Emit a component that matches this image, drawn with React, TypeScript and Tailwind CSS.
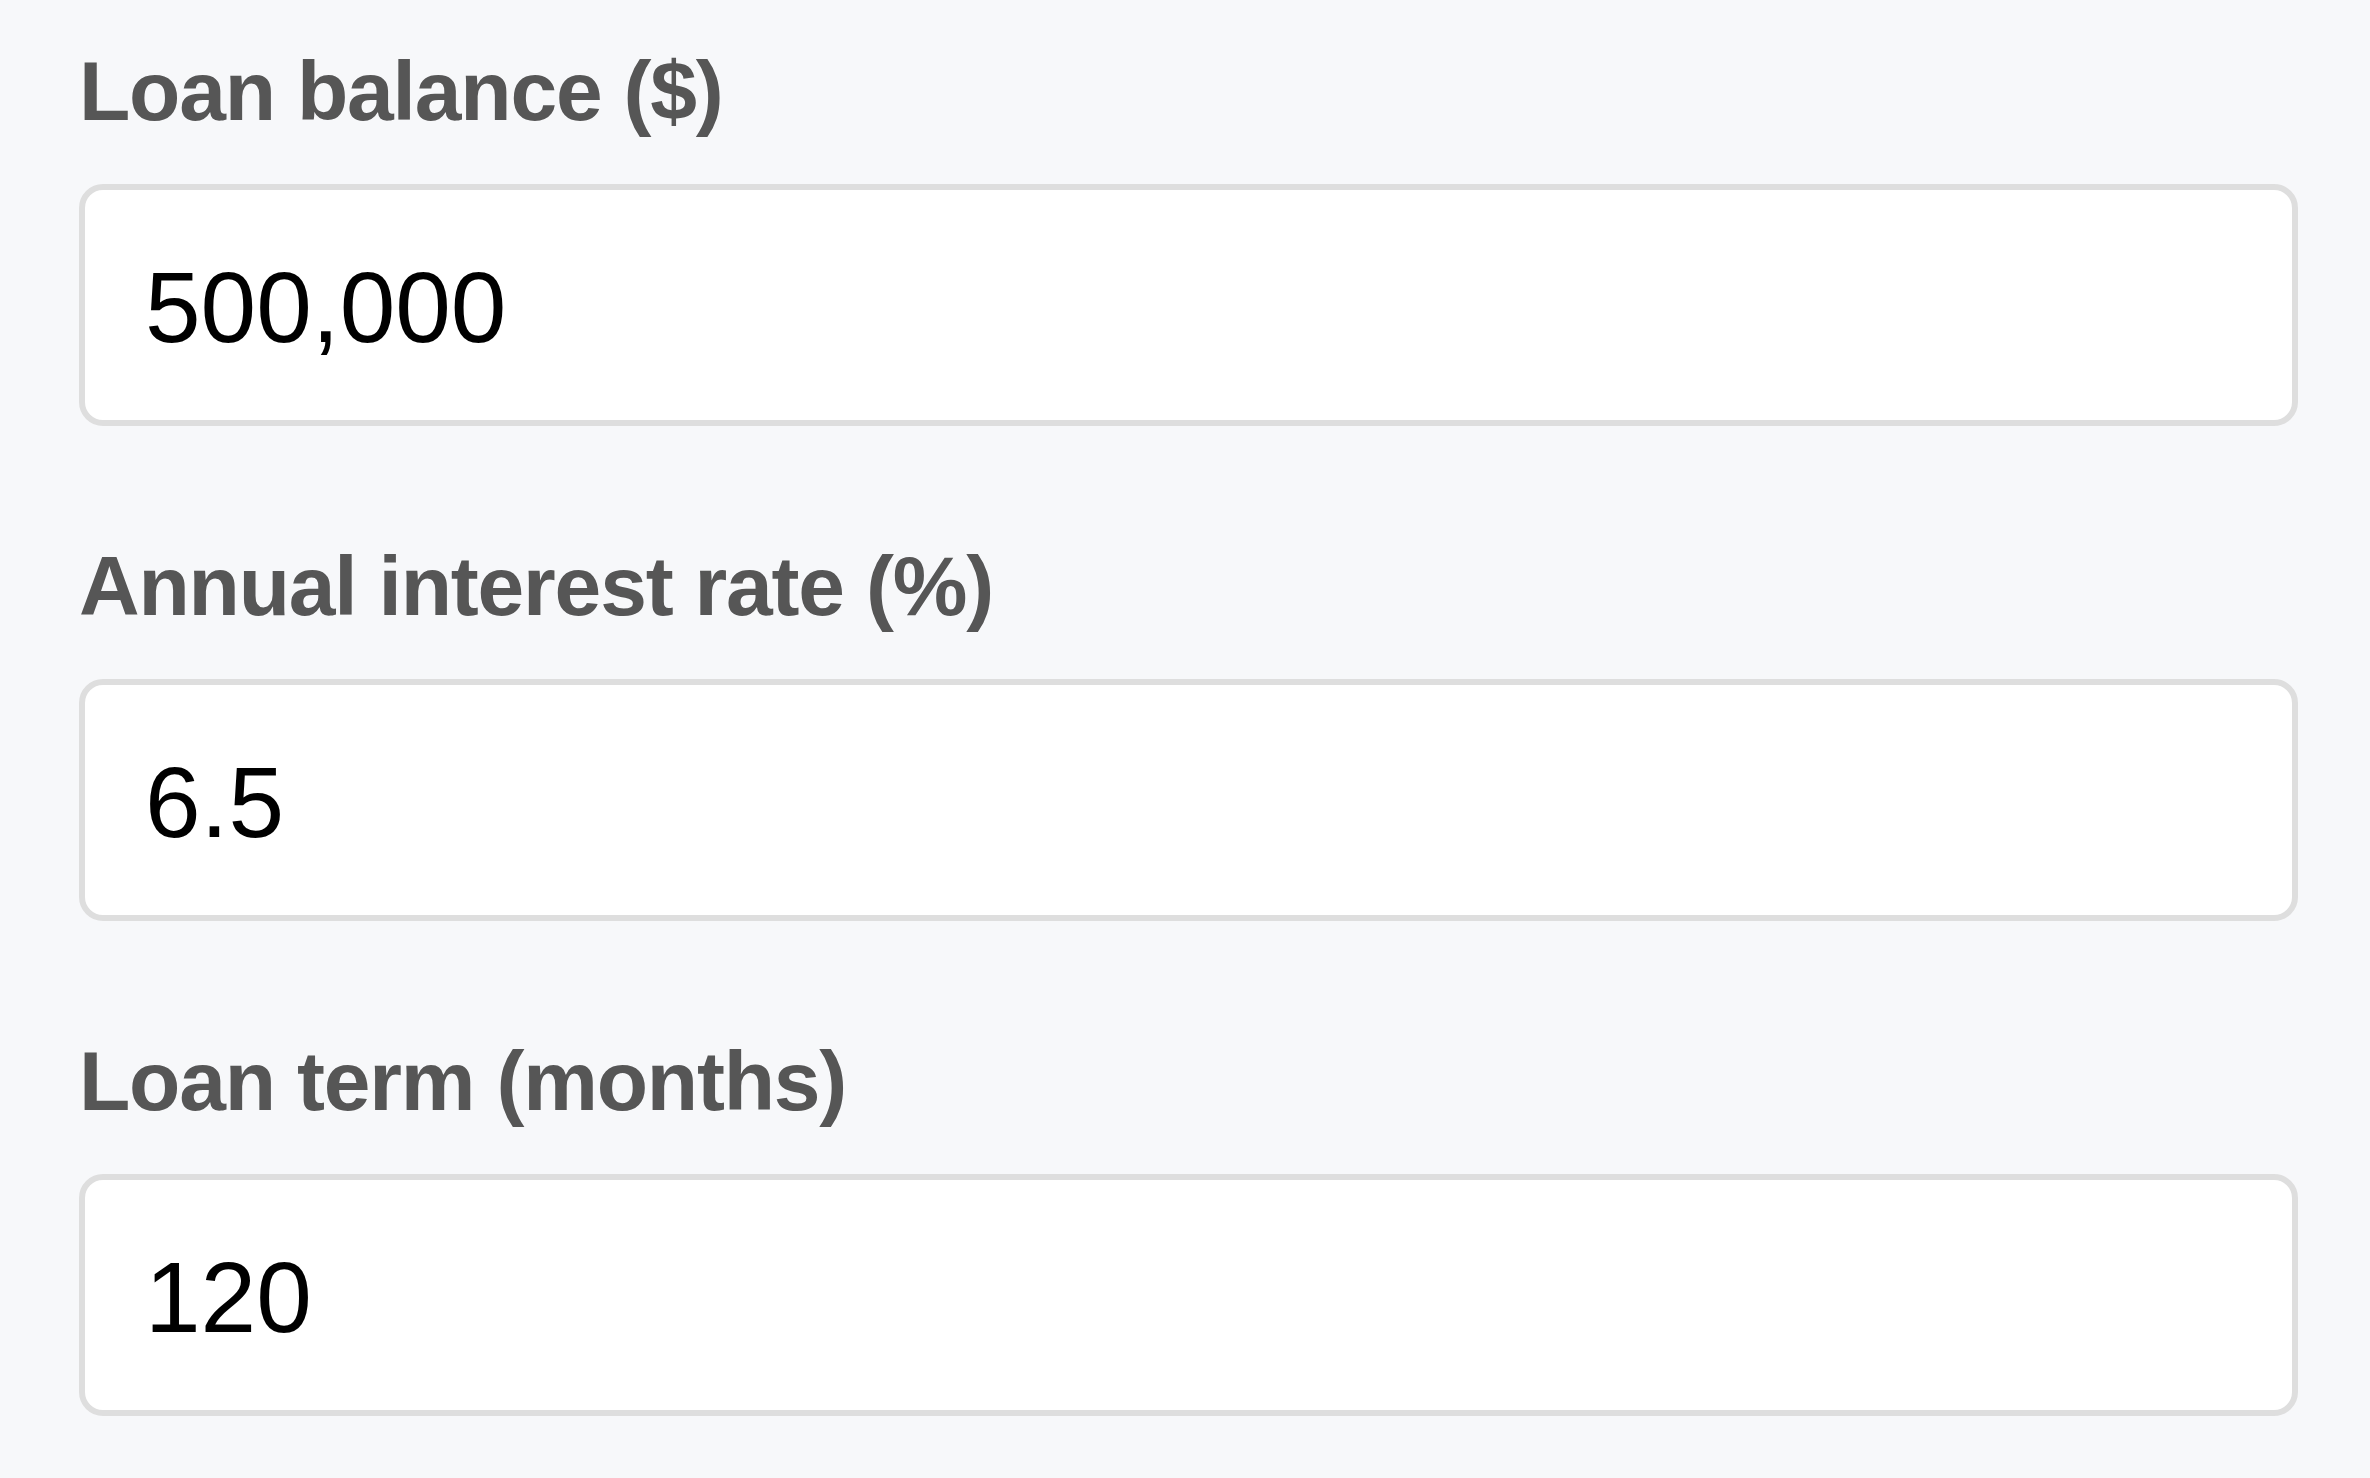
const fields = [
	{ label: "Loan balance ($)", value: "500,000" },
	{ label: "Annual interest rate (%)", value: "6.5" },
	{ label: "Loan term (months)", value: "120" },
];

function Field({ label, value, first }: { label: string; value: string; first?: boolean }) {
	return (
		<div className={first ? "" : "mt-[110px]"}>
			<label className="block text-[84px] leading-[100px] font-bold tracking-[-1.2px] text-[#565656]">
				{label}
			</label>
			<div className="mt-[43px] flex h-[242px] items-center rounded-[24px] border-[6px] border-[#dedede] bg-white pl-[60px]">
				<input
					readOnly
					defaultValue={value}
					className="w-full bg-transparent pt-[4px] text-[100px] leading-none text-black outline-none"
					style={{ fontFamily: '"Liberation Sans", Arial, sans-serif' }}
				/>
			</div>
		</div>
	);
}

export default function App() {
	return (
		<div
			className="min-h-screen bg-[#f7f8fa] pt-[41px] pl-[79px] pr-[72px]"
			style={{ fontFamily: '"Liberation Sans", Arial, sans-serif' }}
		>
			{fields.map((f, i) => (
				<Field key={f.label} label={f.label} value={f.value} first={i === 0} />
			))}
		</div>
	);
}
